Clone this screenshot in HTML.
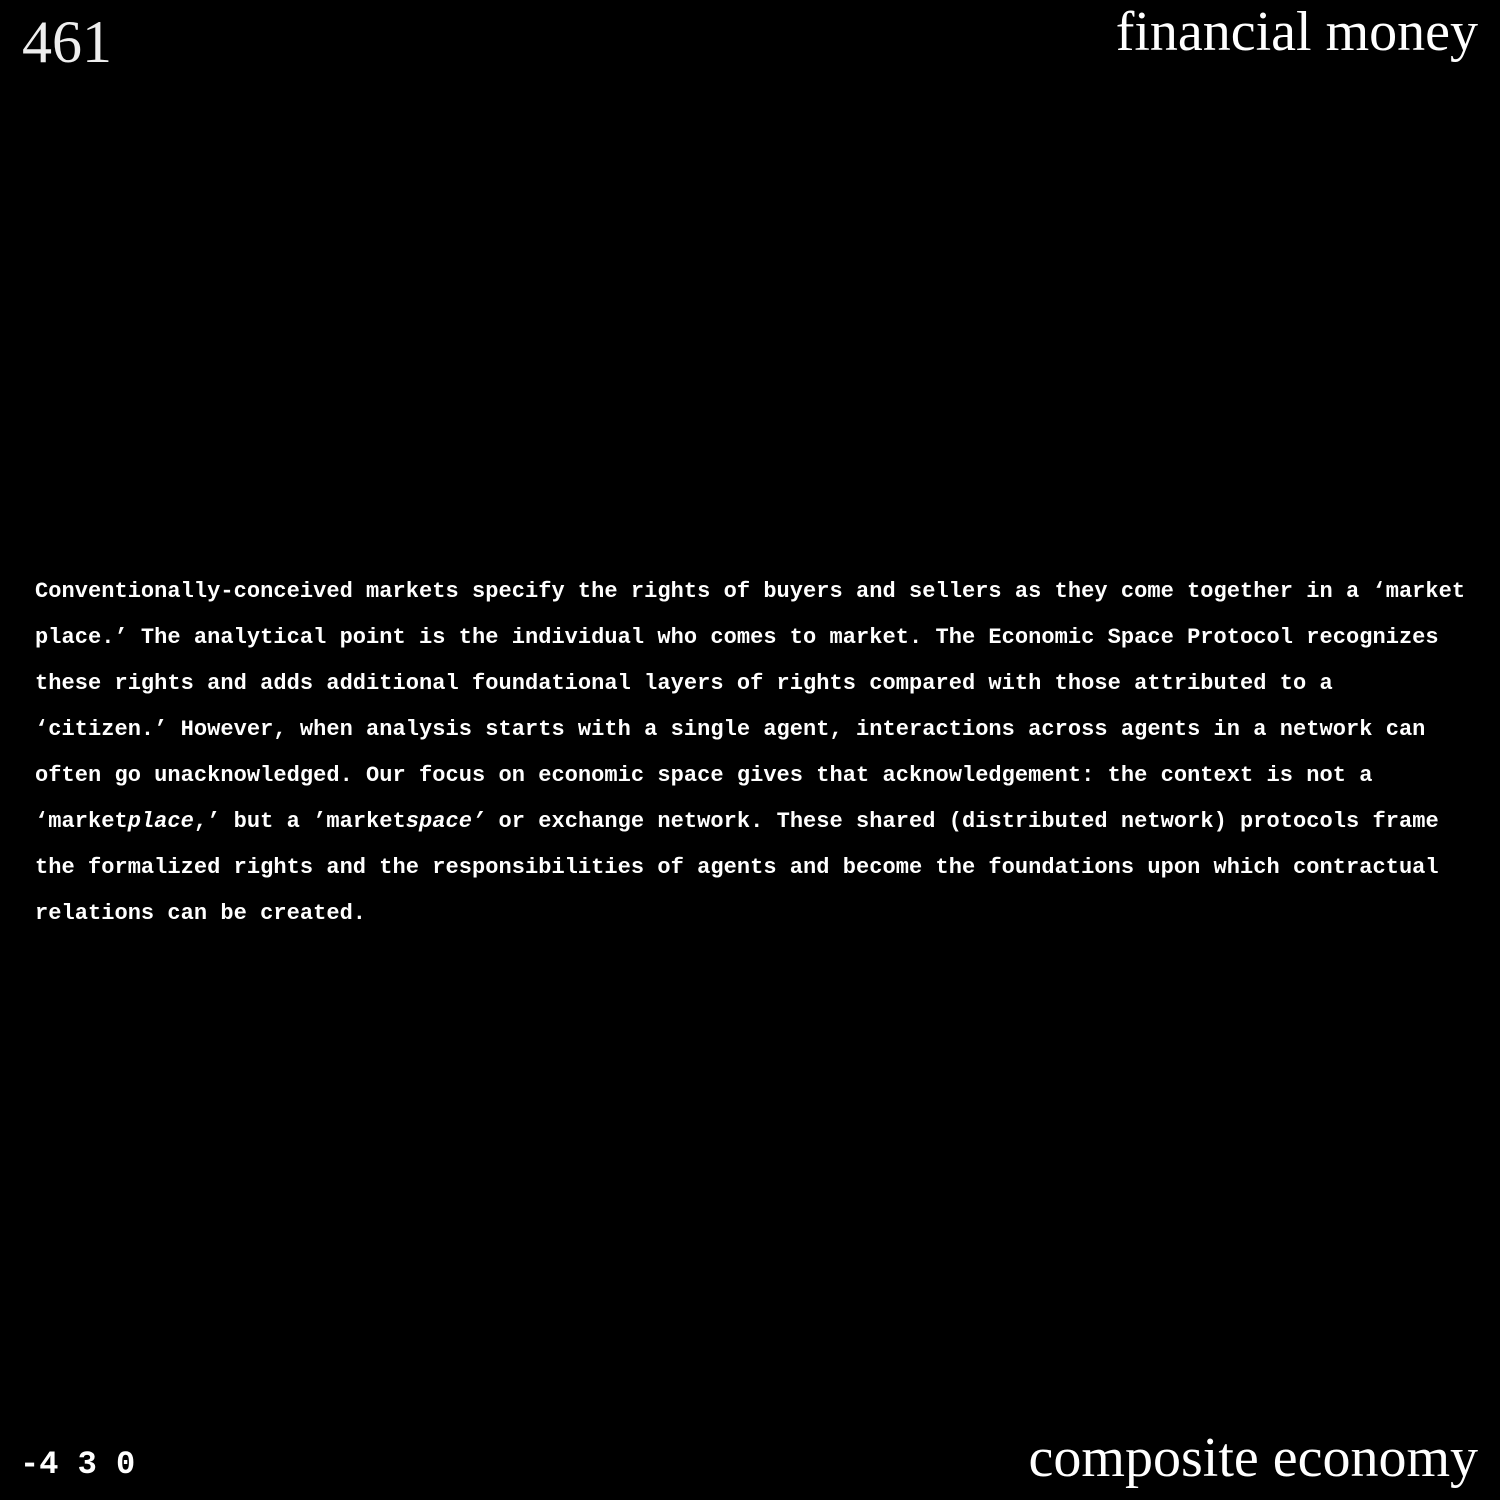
<!DOCTYPE html>
<html><head><meta charset="utf-8"><style>
html,body{margin:0;padding:0;background:#000;}
body{width:1500px;height:1500px;position:relative;overflow:hidden;color:#fff;}
.s{position:absolute;font-family:"Liberation Serif",serif;font-size:56px;line-height:1;white-space:nowrap;}
#tl{left:22px;top:12px;color:#eee;font-size:60px;}
#tr{right:22px;top:4px;}
#br{right:22px;top:1430px;}
#bl{position:absolute;left:20px;top:1449px;font-family:"Liberation Mono",monospace;font-weight:bold;font-size:32px;line-height:1;white-space:pre;}
#body{position:absolute;left:35px;top:569px;width:1450px;font-family:"Liberation Mono",monospace;font-weight:bold;font-size:22px;letter-spacing:0.04px;line-height:46px;white-space:pre;}
</style></head><body>
<div class="s" id="tl">461</div>
<div class="s" id="tr">financial money</div>
<div id="body">Conventionally-conceived markets specify the rights of buyers and sellers as they come together in a ‘market
place.’ The analytical point is the individual who comes to market. The Economic Space Protocol recognizes
these rights and adds additional foundational layers of rights compared with those attributed to a
‘citizen.’ However, when analysis starts with a single agent, interactions across agents in a network can
often go unacknowledged. Our focus on economic space gives that acknowledgement: the context is not a
‘market<i>place</i>,’ but a ’market<i>space’</i> or exchange network. These shared (distributed network) protocols frame
the formalized rights and the responsibilities of agents and become the foundations upon which contractual
relations can be created.</div>
<div id="bl">-4 3 0</div>
<div class="s" id="br">composite economy</div>
</body></html>
